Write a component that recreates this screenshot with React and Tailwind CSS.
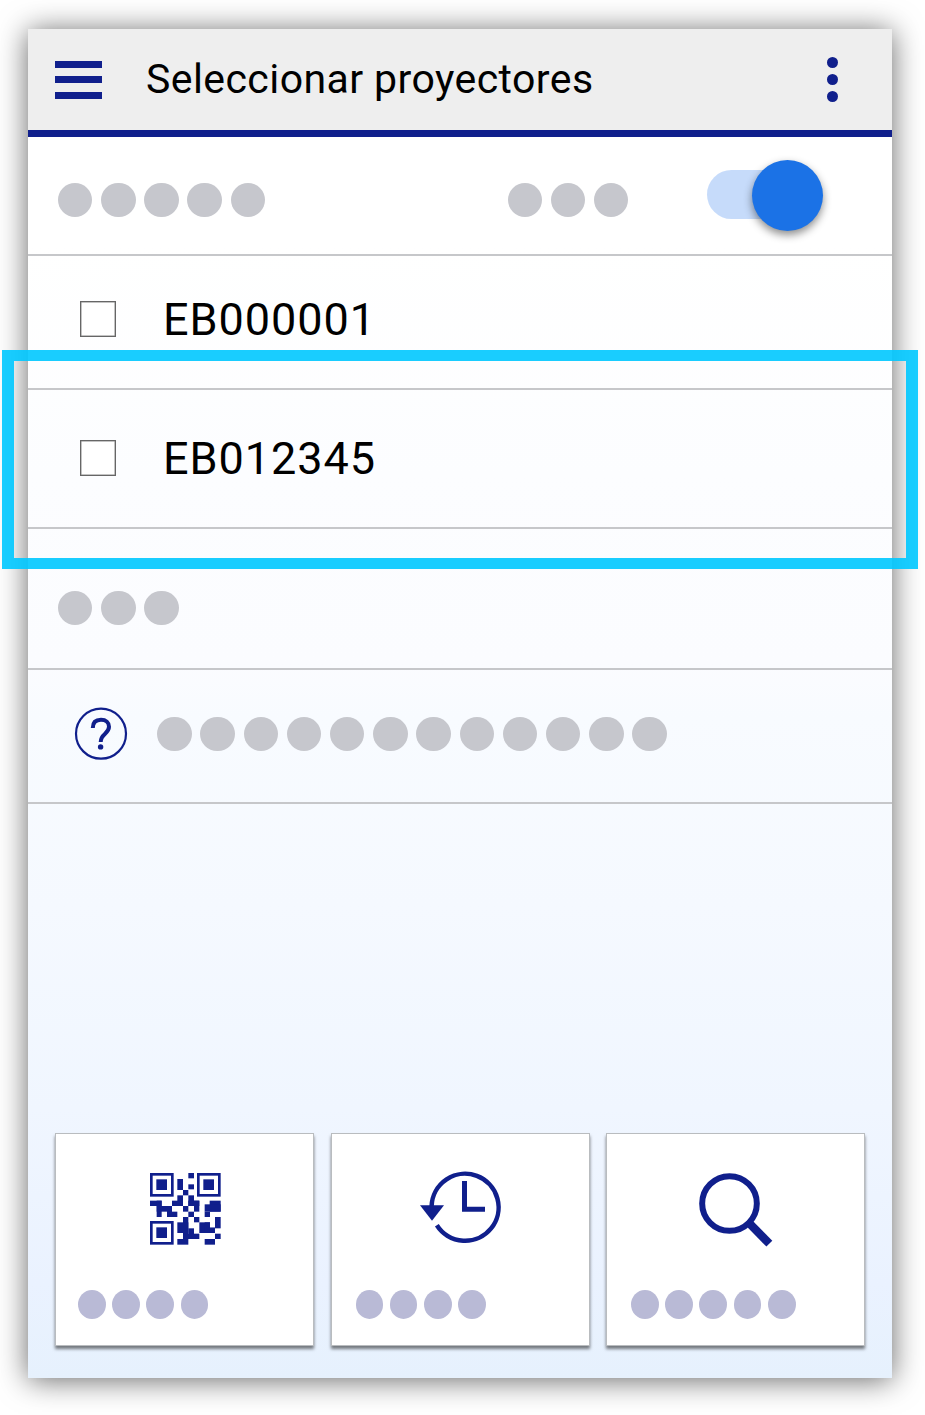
const times = (n) => Array.from({ length: n }, (_, i) => i);

function Dots({ count }) {
  return (
    <div className="flex gap-[8.8px]">
      {times(count).map((i) => (
        <span key={i} className="h-[34.4px] w-[34.4px] rounded-full bg-[#c6c7cd]" />
      ))}
    </div>
  );
}

function SmallDots({ count }) {
  return (
    <div className="flex gap-[6.4px]">
      {times(count).map((i) => (
        <span key={i} className="h-[29px] w-[27.8px] rounded-[50%] bg-[#b9bad6]" />
      ))}
    </div>
  );
}

function ProjectorRow({ name, className }) {
  return (
    <div className={`flex items-start border-b-2 border-[#c6c7ca] pl-[52px] ${className}`}>
      <span className="mt-[45px] h-9 w-9 border-[1.5px] border-[#666] bg-white shadow-[inset_0_0_0_0.5px_#888]" />
      <span className="ml-[47px] mt-[38px] whitespace-nowrap text-[45px] leading-[52px] tracking-[0.95px] text-black">
        {name}
      </span>
    </div>
  );
}

// [x1, y1, x2, y2] of each dark block of the code
const qrBlocks = [
  [145, 39, 162, 55], [112, 57, 129, 90], [145, 73, 162, 88], [129, 90, 145, 106],
  [112, 106, 129, 138], [96, 122, 129, 138], [145, 106, 162, 138],
  [145, 122, 178, 138], [162, 122, 178, 155], [30, 122, 65, 138], [50, 122, 65, 171],
  [50, 138, 96, 155], [81, 138, 96, 171], [81, 155, 112, 171], [129, 138, 145, 155],
  [145, 155, 162, 171], [209, 122, 242, 155], [194, 133, 242, 155], [194, 155, 210, 171],
  [129, 171, 145, 237], [112, 187, 145, 219], [145, 205, 162, 237], [129, 221, 178, 237],
  [112, 237, 145, 254], [162, 171, 178, 187], [178, 187, 210, 219], [194, 203, 225, 219],
  [225, 171, 242, 205], [225, 221, 242, 237], [194, 187, 210, 219], [209, 203, 225, 219],
  [194, 237, 225, 254],
];
const finders = [[30, 39], [171, 39], [30, 183]];

function QrIcon() {
  return (
    <svg width="90" height="95" viewBox="0 0 270 285" fill="#101f8c">
      {finders.map(([x, y]) => (
        <g key={`${x}-${y}`}>
          <rect x={x + 4} y={y + 4} width="63" height="63" fill="none" stroke="#101f8c" strokeWidth="8" />
          <rect x={x + 19} y={y + 19} width="32" height="32" />
        </g>
      ))}
      {qrBlocks.map(([a, b, c, d]) => (
        <rect key={`${a}-${b}-${c}-${d}`} x={a} y={b} width={c - a} height={d - b} />
      ))}
    </svg>
  );
}

function HistoryIcon() {
  return (
    <svg width="100" height="95" viewBox="0 0 300 285" fill="none" stroke="#101f8c">
      <path d="M64.800 138A100.500 100.500 0 1 1 80.500 196" strokeWidth="13.500" />
      <path d="M30 136H102L66 182Z" fill="#101f8c" stroke="none" />
      <path d="M163.500 63V147.500H225" strokeWidth="15" />
    </svg>
  );
}

function SearchIcon() {
  return (
    <svg width="100" height="95" viewBox="0 0 300 285" fill="none" stroke="#101f8c">
      <circle cx="118.500" cy="130.500" r="82" strokeWidth="18" />
      <path d="M176 188L238 251" strokeWidth="25" />
    </svg>
  );
}

function ActionCard({ className, dotsClass, icon, count }) {
  return (
    <div className={`h-[213px] w-[259px] border border-[#b9bcbf] bg-white pt-[26px] shadow-[0_3px_3px_rgba(0,0,0,0.5)] ${className}`}>
      {icon}
      <div className={`mt-[35px] ${dotsClass}`}>
        <SmallDots count={count} />
      </div>
    </div>
  );
}

export default function App() {
  return (
    <div className="relative h-[1415px] w-[925px] overflow-hidden bg-white pl-[28px] pt-[29px] font-['Roboto',sans-serif]">
      <main className="h-[1349px] w-[864px] bg-[linear-gradient(180deg,#ffffff_0%,#ffffff_16%,#fcfdff_33%,#fbfcff_47%,#f8fbff_51%,#f5f9ff_65%,#f0f6ff_80%,#eaf2ff_93%,#e6f1fd_100%)] shadow-[0_2px_28px_rgba(0,0,0,0.6)]">
        <header className="flex h-[108px] items-start border-b-[7px] border-[#101f8c] bg-[#eeeeee] pl-[27px]">
          <div className="mt-8 flex w-[47px] flex-col gap-[8.800px]">
            {times(3).map((i) => (
              <span key={i} className="h-[6.700px] bg-[#101f8c]" />
            ))}
          </div>
          <h1 className="ml-[44px] mt-[20px] w-[460px] whitespace-nowrap text-[41px] font-normal leading-[60px] tracking-[0.42px] text-black">
            Seleccionar proyectores
          </h1>
          <div className="ml-[221px] mt-7 flex flex-col gap-1.5">
            {times(3).map((i) => (
              <span key={i} className="h-[11px] w-[11px] rounded-full bg-[#101f8c]" />
            ))}
          </div>
        </header>

        <section className="flex h-[119px] items-start border-b-2 border-[#c6c7ca] pl-[30px]">
          <div className="mt-[46px] w-[207px]">
            <Dots count={5} />
          </div>
          <div className="ml-[242.5px] mt-[46px] w-[121px]">
            <Dots count={3} />
          </div>
          <div className="ml-[78.5px] mt-[33px] flex h-[49px] w-[112px] items-center justify-end rounded-full bg-[linear-gradient(90deg,#c6dbfa_80%,transparent_80%)]">
            <span className="-mr-[4.300px] mt-[2px] h-[71.300px] w-[71.300px] shrink-0 rounded-full bg-[#1b72e6] shadow-[0_4px_9px_rgba(0,0,0,0.45)]" />
          </div>
        </section>

        <ProjectorRow name="EB000001" className="h-[134px]" />
        <ProjectorRow name="EB012345" className="h-[139px] pt-[5px]" />

        <section className="h-[141px] border-b-2 border-[#c6c7ca] pl-[30px] pt-[62px]">
          <Dots count={3} />
        </section>

        <section className="flex h-[134px] items-start border-b-2 border-[#c6c7ca] pl-[46px] pt-[37px]">
          <svg width="54" height="54" viewBox="0 0 54 54" fill="none" stroke="#101f8c">
            <circle cx="27" cy="26.700" r="25" strokeWidth="2.200" />
            <path d="M18.800 21C18.800 15 22 12.800 27 12.800C32 12.800 35 15.500 35 19.800C35 27 26.700 26.500 26.700 35" strokeWidth="4" />
            <circle cx="26.600" cy="39.900" r="2.700" fill="#101f8c" stroke="none" />
          </svg>
          <div className="ml-[29.3px] mt-[10px]">
            <Dots count={12} />
          </div>
        </section>

        <section className="flex gap-[16.500px] pl-[27px] pt-[329px]">
          <ActionCard className="[&>svg]:ml-[84px]" dotsClass="pl-[22px]" icon={<QrIcon />} count={4} />
          <ActionCard className="[&>svg]:ml-[78px]" dotsClass="pl-6" icon={<HistoryIcon />} count={4} />
          <ActionCard className="[&>svg]:ml-[83px]" dotsClass="pl-6" icon={<SearchIcon />} count={5} />
        </section>
      </main>

      <div className="absolute left-[2px] top-[350px] h-[219px] w-[916px] border-x-[12px] border-y-[11px] border-[rgba(0,200,255,0.9)]" />
    </div>
  );
}
